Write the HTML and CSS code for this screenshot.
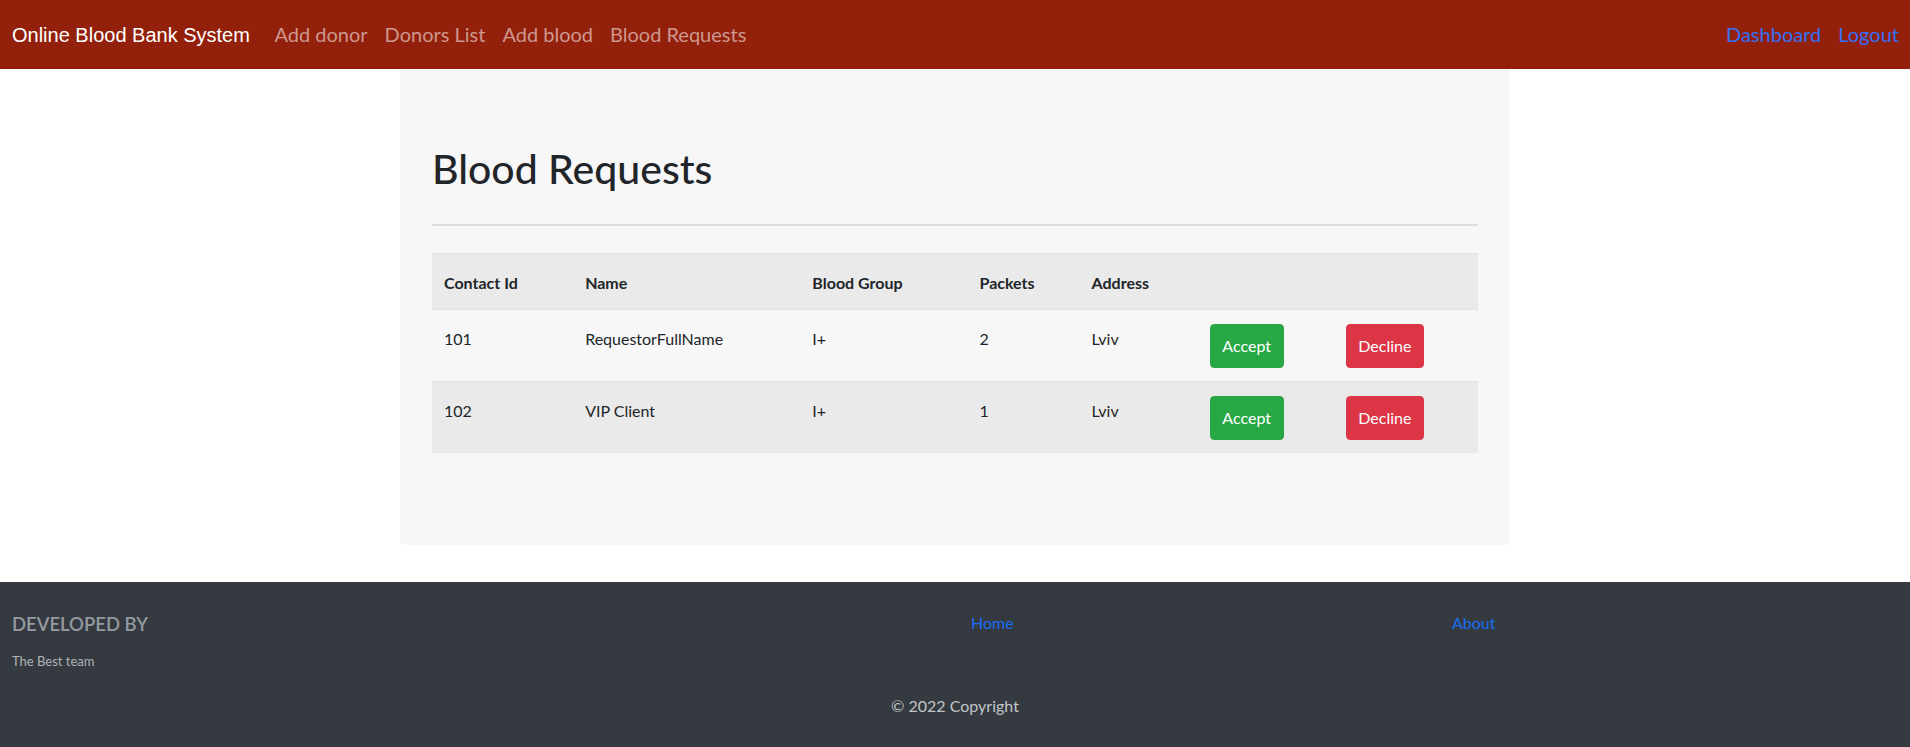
FILE: index.html
```html
<!DOCTYPE html>
<html lang="en">
<head>
<meta charset="utf-8">
<title>Blood Requests</title>
<link rel="stylesheet" href="styles.css">
</head>
<body>
<nav class="navbar">
  <a class="brand" href="#">Online Blood Bank System</a>
  <ul class="nav-left">
    <li><a href="#">Add donor</a></li>
    <li><a href="#">Donors List</a></li>
    <li><a href="#">Add blood</a></li>
    <li><a href="#">Blood Requests</a></li>
  </ul>
  <ul class="nav-right">
    <li><a href="#">Dashboard</a></li>
    <li><a href="#">Logout</a></li>
  </ul>
</nav>

<main class="container">
  <section class="jumbotron">
    <h1 class="title">Blood Requests</h1>
    <hr class="divider">
    <table class="requests">
      <colgroup>
        <col class="c1"><col class="c2"><col class="c3"><col class="c4"><col class="c5"><col class="c6"><col class="c7">
      </colgroup>
      <tr class="head">
        <th>Contact Id</th>
        <th>Name</th>
        <th>Blood Group</th>
        <th>Packets</th>
        <th>Address</th>
        <th></th>
        <th></th>
      </tr>
      <tr class="even">
        <td>101</td>
        <td>RequestorFullName</td>
        <td>I+</td>
        <td>2</td>
        <td>Lviv</td>
        <td><button class="btn btn-accept">Accept</button></td>
        <td><button class="btn btn-decline">Decline</button></td>
      </tr>
      <tr class="odd">
        <td>102</td>
        <td>VIP Client</td>
        <td>I+</td>
        <td>1</td>
        <td>Lviv</td>
        <td><button class="btn btn-accept">Accept</button></td>
        <td><button class="btn btn-decline">Decline</button></td>
      </tr>
    </table>
  </section>
</main>

<footer class="footer">
  <div class="footer-row">
    <div class="footer-about">
      <h5 class="dev-title">DEVELOPED BY</h5>
      <p class="dev-team">The Best team</p>
    </div>
    <div class="footer-col"><a href="#">Home</a></div>
    <div class="footer-col footer-col-last"><a href="#">About</a></div>
  </div>
  <div class="copyright">© 2022 Copyright</div>
</footer>
</body>
</html>
```

FILE: styles.css
```css
* { box-sizing: border-box; }

body {
  margin: 0;
  font-family: Lato, "Open Sans", sans-serif;
  font-size: 16px;
  color: #212529;
  background: #ffffff;
}

a { text-decoration: none; }
ul { list-style: none; margin: 0; padding: 0; }

/* navbar */
.navbar {
  height: 69px;
  background: #93200a;
  display: flex;
  align-items: center;
  padding: 0 11px 0 12px;
}
.brand {
  font-family: "Liberation Sans", Arial, sans-serif;
  font-size: 20px;
  line-height: 30px;
  color: #ffffff;
  margin-right: 16px;
}
.nav-left, .nav-right {
  display: flex;
  padding-bottom: 2px;
}
.nav-left li a, .nav-right li a {
  display: block;
  font-size: 20px;
  line-height: 30px;
  padding: 0 8.5px;
}
.nav-left li a { color: #cd988f; }
.nav-right { margin-left: auto; }
.nav-right li a { color: #3370f7; }
.nav-right li:last-child a { padding-right: 0; }

/* main */
.container {
  width: 1110px;
  margin: 0 auto;
}
.jumbotron {
  background: #f7f7f7;
  border-radius: 0 0 5px 5px;
  padding: 76px 32px 92px;
}
.title {
  margin: 0 0 31px;
  font-size: 41px;
  line-height: 48px;
  font-weight: 500;
}
.divider {
  margin: 0 0 27px;
  border: 0;
  border-top: 2px solid #dcdcdc;
  height: 0;
}

.requests {
  width: 100%;
  border-collapse: collapse;
  table-layout: fixed;
}
.c1 { width: 141px; }
.c2 { width: 227px; }
.c3 { width: 167px; }
.c4 { width: 112px; }
.c5 { width: 118px; }
.c6 { width: 136px; }
.c7 { width: 144px; }

.requests th, .requests td {
  text-align: left;
  vertical-align: top;
  border-top: 1px solid #dee2e6;
  line-height: 30px;
}
.requests th {
  padding: 14px 12px 11px;
  font-weight: 700;
}
.requests td {
  padding: 14px 12px 13px;
}
.head, .odd { background: #eaeaea; }
.even { background: #f7f7f7; }

.btn {
  display: block;
  height: 44px;
  padding: 0;
  border-radius: 4px;
  font-family: inherit;
  font-size: 16px;
  line-height: 42px;
  color: #ffffff;
  text-align: center;
  cursor: pointer;
}
.btn-accept {
  width: 74px;
  background: #28a745;
  border: 1px solid #28a745;
}
.btn-decline {
  width: 78px;
  background: #dc3545;
  border: 1px solid #dc3545;
}

/* footer */
.footer {
  margin-top: 37px;
  background: #343a40;
  padding: 30px 0 29px;
}
.footer-row {
  display: grid;
  grid-template-columns: 955px 477px 1fr;
}
.footer-about { padding-left: 12px; }
.dev-title {
  margin: 0;
  font-size: 18.5px;
  line-height: 24px;
  font-weight: 600;
  color: #949aa0;
}
.dev-team {
  margin: 15px 0 0;
  font-size: 13px;
  line-height: 21px;
  color: #aeb3b8;
}
.footer-col {
  margin-top: -1px;
  padding-left: 16px;
  line-height: 24px;
}
.footer-col-last { padding-left: 20px; }
.footer-col a { color: #1a6ef5; }
.copyright {
  margin-top: 22px;
  text-align: center;
  line-height: 24px;
  color: #c2c5c8;
}
```
